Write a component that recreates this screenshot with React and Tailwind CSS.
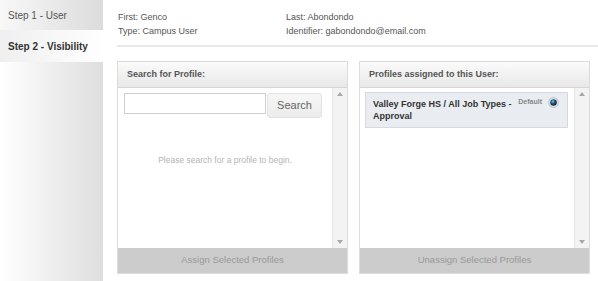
import React from 'react';

function ScrollTrack() {
  return (
    <div className="w-[15px] flex flex-col justify-between items-center bg-[#f3f3f3] border-l border-[#e6e6e6] py-[4px]">
      <svg width="6" height="4" viewBox="0 0 6 4"><path d="M0 4 L3 0 L6 4 Z" fill="#a8a8a8" /></svg>
      <svg width="6" height="4" viewBox="0 0 6 4"><path d="M0 0 L6 0 L3 4 Z" fill="#a8a8a8" /></svg>
    </div>
  );
}

function Panel({ title, footer, children }) {
  return (
    <div className="w-[231px] h-[213px] flex flex-col border border-[#dcdcdc]">
      <div className="h-[26px] shrink-0 flex items-center px-[9px] bg-gradient-to-b from-[#fbfbfb] to-[#e8e8e8] border-b border-[#d6d6d6] text-[9px] font-bold text-[#555]">
        {title}
      </div>
      <div className="flex-1 flex bg-white min-h-0">
        <div className="flex-1 min-w-0">{children}</div>
        <ScrollTrack />
      </div>
      <div className="h-[25px] shrink-0 flex items-center justify-center bg-[#cccccc] text-[9.5px] text-[#999]">
        {footer}
      </div>
    </div>
  );
}

function RadioDot() {
  return (
    <svg width="11" height="11" viewBox="0 0 11 11">
      <defs>
        <radialGradient id="rd" cx="0.4" cy="0.35" r="0.6">
          <stop offset="0" stopColor="#8fc3e6" />
          <stop offset="0.45" stopColor="#1f5f8f" />
          <stop offset="1" stopColor="#0c2b45" />
        </radialGradient>
      </defs>
      <circle cx="5.5" cy="5.5" r="5" fill="#e4e4e4" stroke="#b8b8b8" strokeWidth="0.8" />
      <circle cx="5.5" cy="5.5" r="3.3" fill="url(#rd)" />
    </svg>
  );
}

export default function App() {
  return (
    <div className="w-[598px] h-[281px] flex bg-white overflow-hidden" style={{ fontFamily: '"Liberation Sans", Arial, sans-serif' }}>
      {/* sidebar */}
      <div className="w-[103px] h-full flex flex-col bg-gradient-to-r from-white to-[#dedede]">
        <div className="h-[30px] flex items-center pl-[8px] text-[10px] text-[#555] bg-gradient-to-r from-[#f8f8f8] to-[#dcdcdc]">
          Step 1 - User
        </div>
        <div className="h-[32px] flex items-center pl-[8px] text-[10px] font-bold text-[#333] bg-gradient-to-r from-[#efefef] to-white">
          Step 2 - Visibility
        </div>
      </div>

      {/* content */}
      <div className="flex-1 pl-[14px] flex flex-col">
        <div className="pt-[10px] pl-[1px] grid grid-cols-[168px_1fr] text-[9px] leading-[14px] text-[#555]">
          <div>First: Genco</div>
          <div>Last: Abondondo</div>
          <div>Type: Campus User</div>
          <div>Identifier: gabondondo@email.com</div>
        </div>
        <div className="mt-[7px] h-[2px] bg-[#e9e9e9]" />

        <div className="mt-[14px] flex gap-[11px]">
          <Panel title="Search for Profile:" footer="Assign Selected Profiles">
            <div className="pt-[5px] pl-[6px] flex items-start">
              <input className="w-[142px] h-[21px] border border-[#cfcfcf] bg-white outline-none" />
              <button className="ml-[1px] w-[55px] h-[25px] rounded-[3px] border border-[#e2e2e2] bg-gradient-to-b from-[#f7f7f7] to-[#ececec] text-[11px] text-[#666]">
                Search
              </button>
            </div>
            <div className="mt-[36px] text-center text-[8.5px] text-[#b5b5b5]">
              Please search for a profile to begin.
            </div>
          </Panel>

          <Panel title="Profiles assigned to this User:" footer="Unassign Selected Profiles">
            <div className="pt-[4px] pl-[5px] pr-[6px]">
              <div className="h-[36px] flex items-start justify-between bg-[#e9edf1] border border-[#d6dadf] pl-[7px] pr-[8px] pt-[5px]">
                <div className="text-[9px] leading-[12px] font-bold text-[#333] w-[140px]">
                  Valley Forge HS / All Job Types - Approval
                </div>
                <div className="flex items-center gap-[6px] -mt-[1px]">
                  <span className="text-[7px] font-bold text-[#888]">Default</span>
                  <RadioDot />
                </div>
              </div>
            </div>
          </Panel>
        </div>
      </div>
    </div>
  );
}
